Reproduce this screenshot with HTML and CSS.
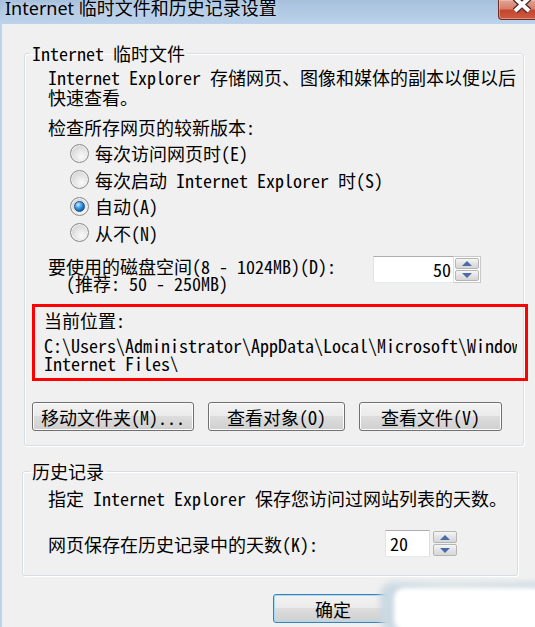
FILE: index.html
```html
<!DOCTYPE html>
<html lang="zh-CN">
<head>
    <meta charset="UTF-8">
    <title>Internet 临时文件和历史记录设置</title>
    <link rel="stylesheet" href="styles.css">
</head>
<body>
    <div class="window">
        <div class="titlebar">
            <span class="title">Internet 临时文件和历史记录设置</span>
            <span class="close-btn">
                <svg width="22" height="16" viewBox="0 0 22 16">
                    <path d="M4 1 L18 14 M18 1 L4 14" stroke="#4a2a25" stroke-width="6.5" fill="none"/>
                    <path d="M4 1 L18 14 M18 1 L4 14" stroke="#ffffff" stroke-width="4" fill="none"/>
                </svg>
            </span>
        </div>
        <div class="client">
            <fieldset class="group group-temp">
                <legend>Internet 临时文件</legend>
                <p class="desc">Internet Explorer 存储网页、图像和媒体的副本以便以后<br>快速查看。</p>
                <p class="heading">检查所存网页的较新版本:</p>
                <div class="radio-list">
                    <div class="radio-row"><span class="radio"></span>每次访问网页时(E)</div>
                    <div class="radio-row"><span class="radio"></span>每次启动 Internet Explorer 时(S)</div>
                    <div class="radio-row"><span class="radio checked"></span>自动(A)</div>
                    <div class="radio-row"><span class="radio"></span>从不(N)</div>
                </div>
                <div class="disk-row">
                    <div class="disk-label">
                        <span class="line">要使用的磁盘空间(8 - 1024MB)(D):</span>
                        <span class="line indent">(推荐: 50 - 250MB)</span>
                    </div>
                    <div class="spin spin-disk">
                        <div class="spin-input">50</div>
                        <div class="spin-btns">
                            <span class="spin-up"></span>
                            <span class="spin-down"></span>
                        </div>
                    </div>
                </div>
                <div class="location">
                    <div class="location-label">当前位置:</div>
                    <div class="path">
                        <div class="path-line">C:\Users\Administrator\AppData\Local\Microsoft\Windows\Temporary</div>
                        <div class="path-line">Internet Files\</div>
                    </div>
                </div>
                <div class="btn-row">
                    <button class="btn btn-move">移动文件夹(M)...</button>
                    <button class="btn btn-objects">查看对象(O)</button>
                    <button class="btn btn-files">查看文件(V)</button>
                </div>
            </fieldset>

            <fieldset class="group group-history">
                <legend>历史记录</legend>
                <p class="desc">指定 Internet Explorer 保存您访问过网站列表的天数。</p>
                <div class="days-row">
                    <div class="days-label">网页保存在历史记录中的天数(K):</div>
                    <div class="spin spin-days">
                        <div class="spin-input">20</div>
                        <div class="spin-btns">
                            <span class="spin-up"></span>
                            <span class="spin-down"></span>
                        </div>
                    </div>
                </div>
            </fieldset>

            <div class="footer">
                <button class="btn btn-ok">确定</button>
            </div>
        </div>
        <div class="smudge-back"></div>
        <div class="smudge"></div>
    </div>
</body>
</html>
```

FILE: styles.css
```css
body {
    margin: 0;
    padding: 0;
    background: #f0f0f0;
    font-family: "Noto Sans Mono CJK SC", "Liberation Mono", "Noto Sans CJK SC", monospace;
    font-size: 18px;
    line-height: 20px;
    color: #000;
}
.window {
    position: relative;
    width: 535px;
    height: 627px;
    overflow: hidden;
    background: #f0f0f0;
}
.titlebar {
    height: 24px;
    display: flex;
    align-items: flex-start;
    background: linear-gradient(#a6c0dd, #bcd3eb);
}
.title {
    padding-left: 5px;
    font-family: "Noto Sans", "Noto Sans CJK SC", sans-serif;
    font-size: 18px;
    line-height: 17px;
    text-shadow: 0 0 6px rgba(255, 255, 255, 0.6);
}
.close-btn {
    margin-left: auto;
    margin-right: -10px;
    width: 47px;
    height: 20px;
    box-sizing: border-box;
    display: flex;
    justify-content: center;
    align-items: flex-start;
    border: 1px solid #6e2c22;
    border-top: none;
    border-radius: 0 0 4px 4px;
    background: linear-gradient(#e3a393 0%, #d77f6c 45%, #c5462f 55%, #cc5a43 100%);
    box-shadow: inset 0 0 0 1px rgba(255, 210, 200, 0.45);
}
.close-btn svg {
    margin-top: -3px;
}
.client {
    height: 603px;
    box-sizing: border-box;
    border-left: 2px solid #bcd3eb;
    padding: 19px 0 0 22px;
}
.group {
    margin: 0;
    border: 1px solid #d5dfe5;
    border-radius: 3px;
    box-shadow: 1px 1px 0 #ffffff, inset 1px 1px 0 #ffffff;
    box-sizing: border-box;
    min-width: 0;
}
.group legend {
    margin-left: -18px;
    padding: 0 2px;
    line-height: 20px;
}
.group p {
    margin: 0;
}
.group-temp {
    width: 500px;
    padding: 0 0 14px 23px;
}
.group-history {
    width: 496px;
    margin: 15px 0 0 -2px;
    padding: 0 0 18px 25px;
}
.desc {
    margin-top: 4px !important;
}
.group-history .desc {
    margin-top: 7px !important;
}
.heading {
    margin-top: 10px !important;
}
.radio-list {
    margin-top: 3px;
    padding-left: 22px;
}
.radio-row {
    height: 26.5px;
    display: flex;
    align-items: center;
    white-space: nowrap;
}
.radio {
    width: 19px;
    height: 19px;
    box-sizing: border-box;
    margin-right: 6px;
    border-radius: 50%;
    border: 1px solid #8a8b8b;
    background: radial-gradient(circle at 62% 68%, #fafafa 0%, #e4e4e4 45%, #c6c6c6 100%);
    box-shadow: inset 0 0 0 1px #f2f2f2;
    display: flex;
    align-items: center;
    justify-content: center;
}
.radio.checked::after {
    content: "";
    width: 11px;
    height: 11px;
    box-sizing: border-box;
    border-radius: 50%;
    border: 1px solid #1b4f8a;
    background: radial-gradient(circle at 35% 30%, #c8ecff 0%, #4aa6e6 35%, #1467b8 70%, #0d4387 100%);
}
.disk-row {
    margin-top: 10px;
    display: flex;
    align-items: flex-start;
}
.disk-label {
    flex: 0 0 325px;
    padding-top: 2px;
    line-height: 17px;
    white-space: nowrap;
}
.disk-label .line {
    display: block;
}
.disk-label .indent {
    padding-left: 18px;
}
.spin {
    display: flex;
    height: 27px;
}
.spin-input {
    background: #fff;
    box-sizing: border-box;
    border: 1px solid;
    border-color: #abadb3 #dbdfe6 #e3e9ef #e2e3ea;
    line-height: 25px;
}
.spin-disk .spin-input {
    width: 81px;
    text-align: right;
    padding-right: 2px;
}
.spin-days .spin-input {
    width: 45px;
    padding-left: 4px;
}
.spin-btns {
    width: 27px;
    box-sizing: border-box;
    display: flex;
    flex-direction: column;
    gap: 1px;
    padding: 1px;
    border: 1px solid #c9c9c9;
    border-left: none;
    background: #fff;
}
.spin-days .spin-btns {
    border: none;
    background: transparent;
    padding: 1px 0 1px 3px;
}
.spin-up, .spin-down {
    flex: 1;
    border: 1px solid #b5b5b5;
    border-radius: 2px;
    background: linear-gradient(#f6f6f6, #e3e3e3 50%, #d6d6d6);
    display: flex;
    align-items: center;
    justify-content: center;
}
.spin-up::after, .spin-down::after {
    content: "";
    width: 0;
    height: 0;
    border-left: 5px solid transparent;
    border-right: 5px solid transparent;
}
.spin-up::after {
    border-bottom: 5px solid #4a6aa8;
}
.spin-down::after {
    border-top: 5px solid #4a6aa8;
}
.location {
    margin: 12px 0 0 -16px;
    width: 496px;
    box-sizing: border-box;
    border: 3px solid #ff0000;
    padding: 3px 0 6px 9px;
}
.path {
    margin-top: 6px;
    width: 473px;
    overflow: hidden;
    line-height: 18px;
}
.path-line {
    white-space: nowrap;
}
.btn-row {
    margin: 21px 0 0 -16px;
    display: flex;
    gap: 14px;
}
.btn {
    height: 29px;
    padding: 0;
    font: inherit;
    color: #000;
    border: 1px solid #707070;
    border-radius: 3px;
    background: linear-gradient(#f2f2f2 0%, #ebebeb 49%, #dddddd 50%, #cfcfcf 100%);
    box-shadow: inset 0 0 0 1px #fcfcfc;
    white-space: nowrap;
}
.btn-move {
    width: 162px;
}
.btn-objects {
    width: 137px;
}
.btn-files {
    width: 143px;
}
.days-row {
    margin-top: 22px;
    display: flex;
    align-items: center;
}
.days-label {
    flex: 0 0 337px;
    white-space: nowrap;
}
.footer {
    margin: 18px 0 0 249px;
}
.btn-ok {
    width: 120px;
    border-color: #3c7fb1;
    box-shadow: inset 0 0 0 1px #a8dcf6;
}
.smudge-back {
    position: absolute;
    left: 380px;
    top: 582px;
    width: 170px;
    height: 50px;
    border-radius: 14px;
    background: linear-gradient(90deg, #c9d8e2, #d9e3e6 40%, #cfdbe3);
    filter: blur(3px);
}
.smudge {
    position: absolute;
    left: 394px;
    top: 588px;
    width: 150px;
    height: 42px;
    border-radius: 10px;
    background: #ffffff;
    filter: blur(2px);
}
```
